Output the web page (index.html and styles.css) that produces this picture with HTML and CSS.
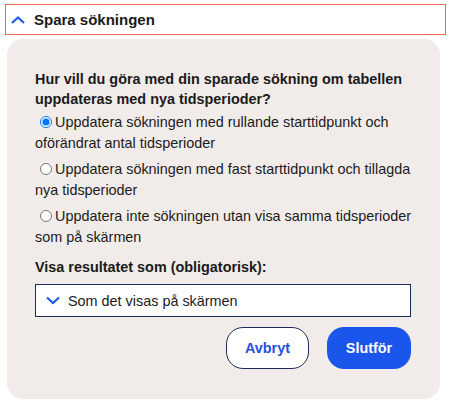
FILE: index.html
```html
<!DOCTYPE html>
<html lang="sv">
<head>
<meta charset="utf-8">
<title>Spara sökningen</title>
<link rel="stylesheet" href="styles.css">
</head>
<body>
<div class="wrap">
  <div class="acc-head">
    <svg class="chev-up" width="14" height="8" viewBox="0 0 14 8" aria-hidden="true"><path d="M1 7 L7 1.5 L13 7" fill="none" stroke="#1f5ae8" stroke-width="2.2"/></svg>
    <span class="acc-title">Spara sökningen</span>
  </div>
  <div class="panel">
    <p class="question">Hur vill du göra med din sparade sökning om tabellen uppdateras med nya tidsperioder?</p>
    <label class="opt"><input type="radio" name="upd" checked>Uppdatera sökningen med rullande starttidpunkt och oförändrat antal tidsperioder</label>
    <label class="opt"><input type="radio" name="upd">Uppdatera sökningen med fast starttidpunkt och tillagda nya tidsperioder</label>
    <label class="opt"><input type="radio" name="upd">Uppdatera inte sökningen utan visa samma tidsperioder som på skärmen</label>
    <p class="label">Visa resultatet som (obligatorisk):</p>
    <div class="select">
      <svg class="chev-down" width="14" height="9" viewBox="0 0 14 9" aria-hidden="true"><path d="M1 1.5 L7 7 L13 1.5" fill="none" stroke="#1f5ae8" stroke-width="2.2"/></svg>
      <span>Som det visas på skärmen</span>
    </div>
    <div class="actions">
      <button class="btn btn-sec">Avbryt</button>
      <button class="btn btn-pri">Slutför</button>
    </div>
  </div>
</div>
</body>
</html>
```
FILE: styles.css
```css
html, body {
  margin: 0;
  padding: 0;
  background: #ffffff;
}
body {
  font-family: "Liberation Sans", Arial, sans-serif;
  color: #1b1b1b;
}
.wrap {
  padding: 4px 6px 0 5px;
}
.acc-head {
  height: 29px;
  border: 1px solid #ef6b57;
  display: flex;
  align-items: center;
}
.chev-up {
  margin-left: 5px;
  margin-right: 9px;
}
.acc-title {
  font-size: 15px;
  font-weight: bold;
}
.panel {
  margin: 4px 6px 0 2px;
  background: #f1ece9;
  border-radius: 16px;
  padding: 30px 29px 30px 28px;
}
.question {
  margin: 0 0 3px 0;
  font-size: 14.4px;
  font-weight: bold;
  line-height: 20px;
}
.opt {
  display: block;
  font-size: 14.4px;
  line-height: 21px;
  margin-bottom: 5px;
}
.opt input {
  margin: 0 3px 0 5px;
  width: 12px;
  height: 12px;
  vertical-align: -1px;
  accent-color: #0075ff;
}
.label {
  margin: 9px 0 7px 0;
  font-size: 14.4px;
  font-weight: bold;
  line-height: 20px;
}
.select {
  height: 31px;
  border: 1px solid #1c2a5a;
  background: #ffffff;
  display: flex;
  align-items: center;
  font-size: 14.4px;
}
.chev-down {
  margin-left: 10px;
  margin-right: 8px;
}
.actions {
  display: flex;
  justify-content: flex-end;
  gap: 18px;
  margin-top: 10px;
}
.btn {
  height: 42px;
  border-radius: 17px;
  font-family: "Liberation Sans", Arial, sans-serif;
  font-size: 14.4px;
  font-weight: bold;
  cursor: pointer;
}
.btn-sec {
  width: 83px;
  background: #ffffff;
  border: 1px solid #1c2a5a;
  color: #2550e0;
}
.btn-pri {
  width: 84px;
  background: #1a56eb;
  border: none;
  color: #ffffff;
}
```
